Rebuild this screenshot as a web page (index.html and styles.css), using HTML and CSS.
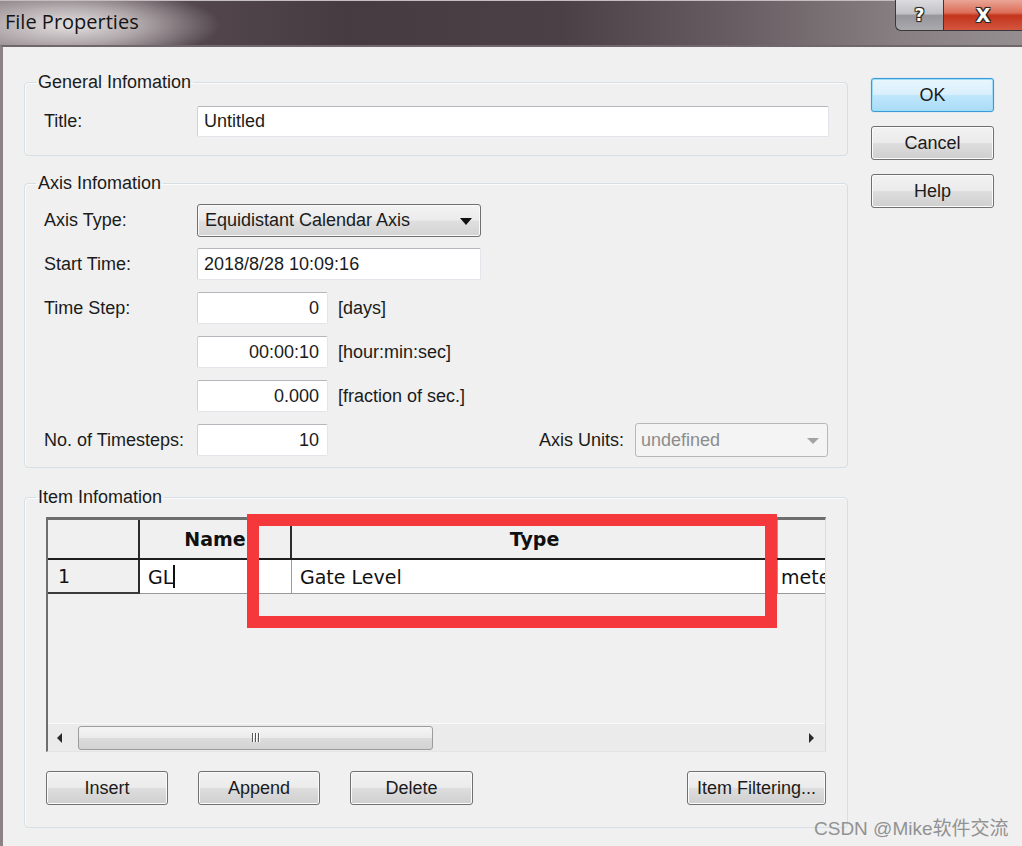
FILE: index.html
```html
<!DOCTYPE html>
<html>
<head>
<meta charset="utf-8">
<title>File Properties</title>
<link rel="stylesheet" href="styles.css">
</head>
<body>
<div class="window">
  <div class="titlebar">
    <span class="title">File Properties</span>
    <div class="caption-btns">
      <div class="cap-btn cap-help">?</div>
      <div class="cap-btn cap-close">X</div>
    </div>
  </div>
  <div class="body">
    <div class="main">
      <fieldset class="group">
        <legend>General Infomation</legend>
        <div class="content general">
          <div class="row">
            <span class="lbl">Title:</span>
            <div class="field flex">Untitled</div>
          </div>
        </div>
      </fieldset>

      <fieldset class="group axis-group">
        <legend>Axis Infomation</legend>
        <div class="content axis">
          <div class="row">
            <span class="lbl">Axis Type:</span>
            <div class="combo">Equidistant Calendar Axis<span class="arrow"></span></div>
          </div>
          <div class="row">
            <span class="lbl">Start Time:</span>
            <div class="field long">2018/8/28 10:09:16</div>
          </div>
          <div class="row">
            <span class="lbl">Time Step:</span>
            <div class="field short num">0</div>
            <span class="unit">[days]</span>
          </div>
          <div class="row">
            <span class="lbl"></span>
            <div class="field short num">00:00:10</div>
            <span class="unit">[hour:min:sec]</span>
          </div>
          <div class="row">
            <span class="lbl"></span>
            <div class="field short num">0.000</div>
            <span class="unit">[fraction of sec.]</span>
          </div>
          <div class="row">
            <span class="lbl">No. of Timesteps:</span>
            <div class="field short num">10</div>
            <span class="spacer"></span>
            <span class="units-lbl">Axis Units:</span>
            <div class="combo disabled">undefined<span class="arrow"></span></div>
          </div>
        </div>
      </fieldset>

      <fieldset class="group item-group">
        <legend>Item Infomation</legend>
        <div class="content items">
          <div class="grid">
            <div class="grow ghead">
              <div class="cell c-rh"></div>
              <div class="cell c-name">Name</div>
              <div class="cell c-type">Type</div>
              <div class="cell c-unit"></div>
            </div>
            <div class="grow gdata">
              <div class="cell c-rh">1</div>
              <div class="cell c-name">GL<span class="caret"></span></div>
              <div class="cell c-type">Gate Level</div>
              <div class="cell c-unit">mete</div>
            </div>
            <div class="hscroll">
              <span class="sarrow left"></span>
              <div class="thumb"><span class="grip"></span><span class="grip"></span><span class="grip"></span></div>
              <span class="sarrow right"></span>
            </div>
            <div class="highlight"></div>
          </div>
          <div class="btnrow">
            <div class="btn w122">Insert</div>
            <div class="btn w122">Append</div>
            <div class="btn w123">Delete</div>
            <div class="btn w139 push">Item Filtering...</div>
          </div>
        </div>
      </fieldset>
    </div>

    <div class="side">
      <div class="btn side-btn ok">OK</div>
      <div class="btn side-btn">Cancel</div>
      <div class="btn side-btn">Help</div>
    </div>
  </div>
  <div class="watermark">CSDN @Mike软件交流</div>
</div>
</body>
</html>
```

FILE: styles.css
```css
* { box-sizing: border-box; }
html, body { margin: 0; padding: 0; }
body {
  width: 1022px;
  height: 846px;
  overflow: hidden;
  background: #f0f0f0;
  font-family: "Liberation Sans", Arial, sans-serif;
  font-size: 18px;
  color: #1b1b1b;
}
.window {
  width: 1022px;
  height: 846px;
  display: flex;
  flex-direction: column;
  position: relative;
}

/* title bar */
.titlebar {
  height: 45px;
  flex: none;
  display: flex;
  align-items: flex-start;
  border-top: 1px solid #c4bec0;
  background:
    radial-gradient(ellipse 150px 38px at 70px 24px, rgba(232,228,228,0.97) 0%, rgba(205,198,200,0.75) 45%, rgba(120,110,115,0) 100%),
    linear-gradient(to right, #7d7378 0%, #54484e 18%, #463b41 34%, #4b4046 55%, #675d62 72%, #877f82 88%, #958e91 100%);
}
.title {
  font-family: "Open Sans", "Liberation Sans", sans-serif;
  font-size: 20px;
  line-height: 42px;
  padding-left: 5px;
  color: #141414;
}
.caption-btns {
  margin-left: auto;
  display: flex;
  margin-top: -1px;
}
.cap-btn {
  height: 31px;
  display: flex;
  align-items: center;
  justify-content: center;
  font-family: "DejaVu Sans", sans-serif;
  font-weight: bold;
  color: #fff;
  text-shadow: 1px 1px 0 #2a2a2a, -1px -1px 0 #2a2a2a, 1px -1px 0 #2a2a2a, -1px 1px 0 #2a2a2a, 0 0 2px #000;
  border: 1px solid #3b363a;
  border-top: none;
}
.cap-help {
  width: 48px;
  font-size: 17px;
  border-radius: 0 0 0 6px;
  border-right: none;
  background: linear-gradient(#dcdcdf 0%, #c2c2c6 45%, #96969c 52%, #a9a9ae 100%);
}
.cap-close {
  width: 79px;
  font-size: 19px;
  border-right: none;
  background: linear-gradient(#eaa596 0%, #dc6e58 42%, #c3341c 52%, #d4563f 100%);
}

/* body */
.body {
  flex: 1;
  display: flex;
  align-items: flex-start;
  gap: 23px;
  padding: 25px 0 0 21px;
  border-left: 3px solid #8d8387;
  border-top: 2px solid #6f676b;
  min-height: 0;
}
.main {
  width: 824px;
  display: flex;
  flex-direction: column;
}
.side {
  width: 123px;
  margin-top: 6px;
  display: flex;
  flex-direction: column;
  gap: 14px;
}

/* group boxes */
.group {
  margin: 0;
  padding: 0;
  border: 1px solid #d5dfe5;
  border-radius: 4px;
  min-width: 0;
  box-shadow: inset 1px 1px 0 #fbfbfb;
}
.group legend {
  margin-left: 11px;
  padding: 0 2px;
  line-height: 20px;
  font-size: 18px;
}
.axis-group { margin-top: 17px; }
.item-group { margin-top: 19px; }

.content { display: flex; flex-direction: column; }
.general { padding: 14px 18px 18px 19px; }
.axis { padding: 11px 18px 11px 19px; gap: 12px; }
.items { padding: 10px 21px 22px 21px; }

.row {
  display: flex;
  align-items: center;
  gap: 10px;
}
.axis .row { height: 32px; }
.lbl {
  width: 143px;
  flex: none;
}
.flex { flex: 1; }
.general .row { height: 31px; }
.general .field { height: 31px; }

.field {
  height: 32px;
  background: #fff;
  border: 1px solid #e3e5ea;
  border-top-color: #b4b6bb;
  border-left-color: #d0d2d6;
  border-radius: 2px;
  padding: 0 6px;
  display: flex;
  align-items: center;
  white-space: nowrap;
}
.long { width: 284px; }
.short { width: 131px; }
.num { justify-content: flex-end; padding-right: 8px; }
.unit { white-space: nowrap; }
.spacer { flex: 1; }
.units-lbl { margin-right: 1px; }

.combo {
  position: relative;
  width: 284px;
  height: 33px;
  border: 1px solid #707070;
  border-radius: 3px;
  background: linear-gradient(#f3f3f3 0%, #ececec 48%, #dfdfdf 52%, #d3d3d3 100%);
  box-shadow: inset 0 0 0 1px #fafafa;
  padding: 0 7px;
  display: flex;
  align-items: center;
  white-space: nowrap;
  flex: none;
}
.combo .arrow {
  position: absolute;
  right: 8px;
  top: 13px;
  width: 0;
  height: 0;
  border-left: 6px solid transparent;
  border-right: 6px solid transparent;
  border-top: 7px solid #111;
}
.combo.disabled {
  width: 193px;
  height: 34px;
  margin-right: 1px;
  background: #f4f4f4;
  border-color: #b5b9bc;
  box-shadow: none;
  color: #8c8c8c;
  padding-left: 5px;
}
.combo.disabled .arrow {
  right: 8px;
  top: 14px;
  border-left-width: 6px;
  border-right-width: 6px;
  border-top: 6px solid #a3a3a3;
}

/* grid */
.grid {
  position: relative;
  height: 235px;
  display: flex;
  flex-direction: column;
  background: #f0f0f0;
  border-top: 3px solid #6e6e6e;
  border-left: 2px solid #6e6e6e;
  border-right: 1px solid #dcdcdc;
  border-bottom: 1px solid #e4e4e4;
  font-family: "DejaVu Sans", sans-serif;
  font-size: 19px;
  color: #111;
}
.grow {
  display: flex;
  flex: none;
  overflow: hidden;
}
.ghead {
  height: 40px;
  border-bottom: 2px solid #1e1e1e;
  font-weight: bold;
}
.gdata {
  height: 34px;
}
.cell {
  flex: none;
  display: flex;
  align-items: center;
  white-space: nowrap;
  overflow: hidden;
}
.c-rh { width: 92px; border-right: 2px solid #2b2b2b; }
.c-name { width: 152px; }
.c-type { width: 486px; }
.c-unit { flex: 1; }
.ghead .cell { justify-content: center; }
.ghead .c-name { border-right: 2px solid #2b2b2b; }
.ghead .c-type { border-right: 1px solid #9a9a9a; }

.gdata .cell { background: #fff; border-bottom: 1px solid #9a9a9a; }
.gdata .c-rh { background: #f0f0f0; border-bottom: 2px solid #3a3a3a; padding-left: 10px; }
.gdata .c-name { padding-left: 8px; border-right: 1px solid #9a9a9a; }
.gdata .c-type { padding-left: 8px; border-right: 1px solid #9a9a9a; }
.gdata .c-unit { padding-left: 3px; }
.caret {
  display: inline-block;
  width: 2px;
  height: 23px;
  background: #111;
  margin-left: 0;
}

.hscroll {
  margin-top: auto;
  height: 28px;
  flex: none;
  display: flex;
  align-items: center;
  background: #ebebeb;
  border-top: 1px solid #f9f9f9;
  position: relative;
}
.sarrow {
  width: 0;
  height: 0;
  border-top: 5px solid transparent;
  border-bottom: 5px solid transparent;
}
.sarrow.left { border-right: 5px solid #2a2a2a; margin-left: 9px; }
.sarrow.right { border-left: 5px solid #2a2a2a; margin-left: auto; margin-right: 11px; }
.thumb {
  width: 355px;
  height: 24px;
  margin-left: 16px;
  border: 1px solid #9c9c9c;
  border-radius: 3px;
  background: linear-gradient(#f5f5f5 0%, #ebebeb 48%, #dcdcdc 52%, #d2d2d2 100%);
  display: flex;
  justify-content: center;
  align-items: center;
  gap: 2px;
}
.grip {
  width: 1px;
  height: 9px;
  background: #555;
  box-shadow: 1px 0 0 #fff;
}

.highlight {
  position: absolute;
  left: 199px;
  top: -6px;
  width: 530px;
  height: 114px;
  border: 12px solid #f5383b;
  pointer-events: none;
}

/* buttons */
.btnrow {
  margin-top: 19px;
  display: flex;
  gap: 30px;
}
.btn {
  height: 34px;
  display: flex;
  align-items: center;
  justify-content: center;
  border: 1px solid #707070;
  border-radius: 3px;
  background: linear-gradient(#f2f2f2 0%, #ebebeb 48%, #dddddd 52%, #cfcfcf 100%);
  box-shadow: inset 0 0 0 1px #fbfbfb;
  white-space: nowrap;
}
.w122 { width: 122px; }
.w123 { width: 123px; }
.w139 { width: 139px; }
.push { margin-left: auto; }
.side-btn { width: 123px; }
.ok {
  border-color: #3c9ad6;
  background: linear-gradient(#e9f6fd 0%, #d9f0fc 48%, #bee6fd 52%, #a9dcf6 100%);
  box-shadow: inset 0 0 0 1px #9fdcf8, 0 0 1px #56b6ee;
}

.watermark {
  position: absolute;
  left: 814px;
  top: 813px;
  font-family: "Liberation Sans", "Noto Sans CJK SC", sans-serif;
  font-size: 19px;
  color: #929292;
  white-space: nowrap;
}
```
